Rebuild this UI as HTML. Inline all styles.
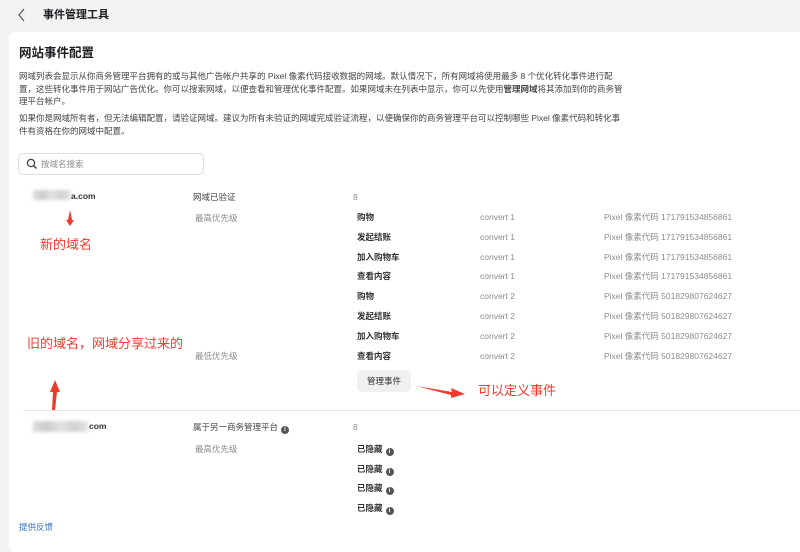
<!DOCTYPE html>
<html><head><meta charset="utf-8"><style>
*{margin:0;padding:0;box-sizing:border-box}
body{width:800px;height:542px;overflow:hidden;background:#f2f2f2;font-family:"Liberation Sans","Noto Sans CJK SC",sans-serif;color:#1c1e21;position:relative}
.a{position:absolute;white-space:nowrap}
.card{position:absolute;left:9px;top:32px;width:800px;height:520px;background:#fff;border-radius:6px}
.p{font-size:8.5px;color:#444;line-height:12.5px}
.s{font-size:8.5px}
.g{color:#8a8d91}
.b{font-weight:bold;color:#333}
.red{color:#f03a2e;font-size:13px}
.i{display:inline-block;width:8px;height:8px;border-radius:50%;background:#555;color:#fff;font-size:6px;text-align:center;line-height:8px;vertical-align:-1px;margin-left:3px;font-weight:bold}
.blur{background:linear-gradient(90deg,#ddd,#ccc,#e2e2e2,#d0d0d0,#e6e6e6);filter:blur(1.5px)}
</style></head><body>
<svg class="a" style="left:17px;top:8px" width="10" height="14" viewBox="0 0 10 14"><path d="M7 1L2 7L7 13" fill="none" stroke="#555" stroke-width="1.2"/></svg>
<div class="a" style="left:43px;top:6px;font-size:11px;font-weight:bold">事件管理工具</div>
<div class="card"></div>
<div class="a" style="left:19px;top:42px;font-size:12.5px;font-weight:bold">网站事件配置</div>
<div class="a p" style="left:19px;top:70px">网域列表会显示从你商务管理平台拥有的或与其他广告帐户共享的 Pixel 像素代码接收数据的网域。默认情况下，所有网域将使用最多 8 个优化转化事件进行配<br>置，这些转化事件用于网站广告优化。你可以搜索网域，以便查看和管理优化事件配置。如果网域未在列表中显示，你可以先使用<b>管理网域</b>将其添加到你的商务管<br>理平台帐户。</div>
<div class="a p" style="left:19px;top:112px">如果你是网域所有者，但无法编辑配置，请验证网域。建议为所有未验证的网域完成验证流程，以便确保你的商务管理平台可以控制哪些 Pixel 像素代码和转化事<br>件有资格在你的网域中配置。</div>
<div class="a" style="left:18px;top:153px;width:186px;height:22px;border:1px solid #dadde1;border-radius:5px"></div>
<svg class="a" style="left:26px;top:158px" width="12" height="12" viewBox="0 0 12 12"><circle cx="5" cy="5" r="3.6" fill="none" stroke="#444" stroke-width="1.3"/><path d="M7.6 7.6L10.5 10.5" stroke="#444" stroke-width="1.4"/></svg>
<div class="a s g" style="left:41px;top:158px">按域名搜索</div>

<div class="a blur" style="left:33px;top:190px;width:38px;height:10px"></div>
<div class="a s b" style="left:71px;top:191px">a.com</div>
<div class="a s" style="left:193px;top:191px;color:#444">网域已验证</div>
<div class="a s g" style="left:353px;top:192px">8</div>
<div class="a s g" style="left:195px;top:212px">最高优先级</div>
<div class="a s g" style="left:195px;top:350px">最低优先级</div>

<div class="a s b" style="left:357px;top:208px;line-height:19.8px">购物<br>发起结账<br>加入购物车<br>查看内容<br>购物<br>发起结账<br>加入购物车<br>查看内容</div>
<div class="a s g" style="left:480px;top:208px;line-height:19.8px">convert 1<br>convert 1<br>convert 1<br>convert 1<br>convert 2<br>convert 2<br>convert 2<br>convert 2</div>
<div class="a s g" style="left:604px;top:208px;line-height:19.8px">Pixel 像素代码 171791534856861<br>Pixel 像素代码 171791534856861<br>Pixel 像素代码 171791534856861<br>Pixel 像素代码 171791534856861<br>Pixel 像素代码 501829807624627<br>Pixel 像素代码 501829807624627<br>Pixel 像素代码 501829807624627<br>Pixel 像素代码 501829807624627</div>
<div class="a s" style="left:357px;top:370px;width:54px;height:22px;background:#f0f0f0;border-radius:5px;line-height:22px;text-align:center;color:#333">管理事件</div>

<div class="a" style="left:23px;top:410px;width:777px;height:1px;background:#e4e4e4"></div>
<div class="a blur" style="left:33px;top:421px;width:55px;height:11px"></div>
<div class="a s b" style="left:89px;top:421px">com</div>
<div class="a s" style="left:193px;top:421px;color:#444">属于另一商务管理平台<span class="i">i</span></div>
<div class="a s g" style="left:353px;top:422px">8</div>
<div class="a s g" style="left:195px;top:443px">最高优先级</div>
<div class="a s b" style="left:357px;top:440px;line-height:19.6px">已隐藏<span class="i">i</span><br>已隐藏<span class="i">i</span><br>已隐藏<span class="i">i</span><br>已隐藏<span class="i">i</span></div>
<div class="a s" style="left:19px;top:521px;color:#3b73c4">提供反馈</div>

<div class="a red" style="left:40px;top:234px">新的域名</div>
<div class="a red" style="left:27px;top:333px">旧的域名，网域分享过来的</div>
<div class="a red" style="left:478px;top:380px">可以定义事件</div>
<svg class="a" style="left:0;top:0" width="800" height="542"><g fill="#f03a2e">
<path d="M70 210L68 220L66 220L70 226L74 220L72 220Z"/>
<path d="M52 410L53 392L50 392L55 380L60 392L57 392L55 410Z"/>
<path d="M416 386L452 392L451 388L465 394L451 398L451 395Z"/>
</g></svg>
</body></html>
